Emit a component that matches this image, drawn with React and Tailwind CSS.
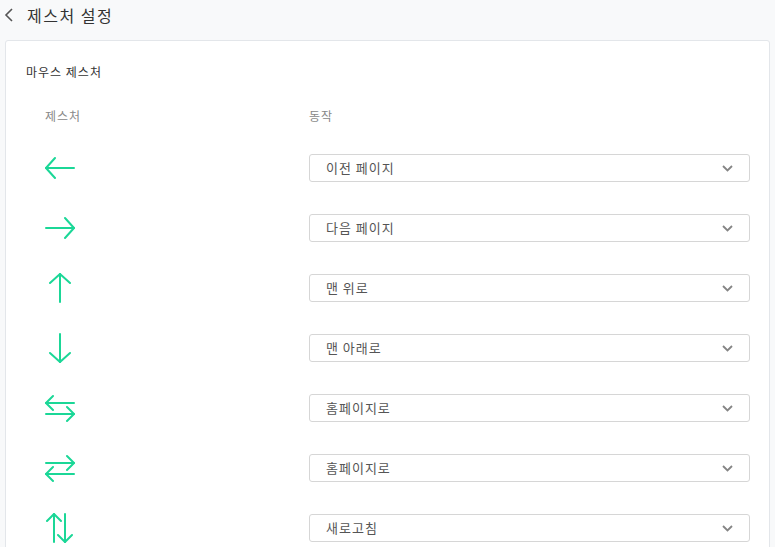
import React from 'react';

const GREEN = '#1bd797';

// gesture icons, all drawn in a 30x30 box
const icons = {
  left: (
    <>
      <path d="M1 15H29" />
      <path d="M10 5L1 15L10 25" />
    </>
  ),
  right: (
    <>
      <path d="M1 15H29" />
      <path d="M20 5L29 15L20 25" />
    </>
  ),
  up: (
    <>
      <path d="M15 1V29" />
      <path d="M5 10L15 1L25 10" />
    </>
  ),
  down: (
    <>
      <path d="M15 1V29" />
      <path d="M5 20L15 29L25 20" />
    </>
  ),
  leftRight: (
    <>
      <path d="M1 10H29" />
      <path d="M8 3L1 10L8 17" />
      <path d="M1 21H29" />
      <path d="M22 14L29 21L22 28" />
    </>
  ),
  rightLeft: (
    <>
      <path d="M1 10H29" />
      <path d="M22 3L29 10L22 17" />
      <path d="M1 21H29" />
      <path d="M8 14L1 21L8 28" />
    </>
  ),
  upDown: (
    <>
      <path d="M9 1V29" />
      <path d="M2 8L9 1L16 8" />
      <path d="M20 1V29" />
      <path d="M13 22L20 29L27 22" />
    </>
  ),
};

const gestures = [
  { icon: 'left', action: '이전 페이지' },
  { icon: 'right', action: '다음 페이지' },
  { icon: 'up', action: '맨 위로' },
  { icon: 'down', action: '맨 아래로' },
  { icon: 'leftRight', action: '홈페이지로' },
  { icon: 'rightLeft', action: '홈페이지로' },
  { icon: 'upDown', action: '새로고침' },
];

const GestureIcon = ({ name }) => (
  <svg
    width="30"
    height="30"
    viewBox="0 0 30 30"
    fill="none"
    stroke={GREEN}
    strokeWidth="2"
    strokeLinecap="round"
    strokeLinejoin="round"
  >
    {icons[name]}
  </svg>
);

const Select = ({ value }) => (
  <div className="flex h-[28px] w-[441px] items-center justify-between rounded-[3px] border border-[#d6d6d6] bg-white pl-[16px] pr-[16px]">
    <span className="text-[13px] tracking-[1px] text-[#555]">{value}</span>
    <svg width="11" height="7" viewBox="0 0 11 7" fill="none" stroke="#858585" strokeWidth="1.8">
      <path d="M1 1L5.5 5.5L10 1" />
    </svg>
  </div>
);

export default function App() {
  return (
    <div
      className="min-h-[547px] bg-[#f8f9fa] pr-[5px] pl-[5px]"
      style={{ fontFamily: '"Noto Sans CJK KR", "Noto Sans", sans-serif' }}
    >
      {/* header */}
      <div className="flex h-[30px] items-center">
        <svg width="10" height="14" viewBox="0 0 10 14" fill="none" stroke="#555" strokeWidth="1.6" className="-ml-[1px]">
          <path d="M8 1L2 7L8 13" />
        </svg>
        <h1 className="ml-[13px] text-[16px] tracking-[1.5px] text-[#333]">제스처 설정</h1>
      </div>

      {/* card */}
      <div className="mt-[10px] rounded-[3px] border border-[#e3e6ea] bg-white pt-[22px] pl-[20px] pr-[19px] pb-[20px]">
        <h2 className="h-[18px] text-[12px] leading-[18px] tracking-[1px] text-[#333]">마우스 제스처</h2>

        <div className="mt-[26px] grid h-[18px] grid-cols-[264px_1fr] pl-[19px] text-[12px] leading-[18px] tracking-[1px] text-[#888]">
          <span>제스처</span>
          <span>동작</span>
        </div>

        <div className="mt-[13px] pl-[19px]">
          {gestures.map((g, i) => (
            <div key={i} className="grid h-[60px] grid-cols-[264px_1fr] items-center">
              <div className="flex h-[30px] w-[30px] items-center">
                <GestureIcon name={g.icon} />
              </div>
              <Select value={g.action} />
            </div>
          ))}
        </div>
      </div>
    </div>
  );
}
